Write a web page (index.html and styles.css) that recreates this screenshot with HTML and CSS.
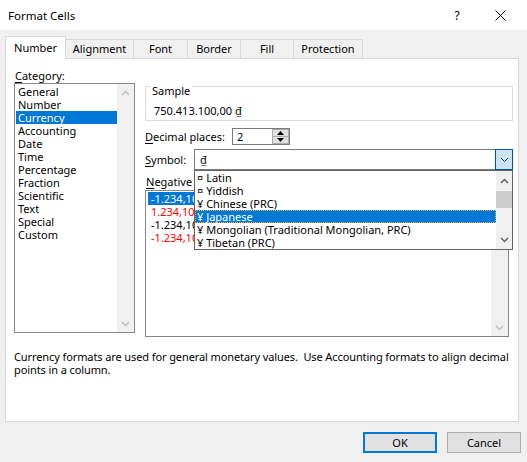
FILE: index.html
```html
<!DOCTYPE html>
<html lang="en">
<head>
    <meta charset="UTF-8">
    <title>Format Cells</title>
    <link rel="stylesheet" href="styles.css">
</head>
<body>
    <div class="titlebar">
        <span class="title">Format Cells</span>
        <span class="title-btn help">?</span>
        <span class="title-btn close">
            <svg width="11" height="11" viewBox="0 0 11 11"><path d="M0.5 0.5 L10.5 10.5 M10.5 0.5 L0.5 10.5" stroke="#000" stroke-width="1" fill="none"/></svg>
        </span>
    </div>

    <div class="tabs">
        <div class="tab tab-number active">Number</div>
        <div class="tab tab-alignment">Alignment</div>
        <div class="tab tab-font">Font</div>
        <div class="tab tab-border">Border</div>
        <div class="tab tab-fill">Fill</div>
        <div class="tab tab-protection">Protection</div>
    </div>

    <div class="panel">
        <div class="columns">
            <div class="category-col">
                <div class="label"><u>C</u>ategory:</div>
                <div class="listbox category-list">
                    <ul class="items">
                        <li>General</li>
                        <li>Number</li>
                        <li class="selected">Currency</li>
                        <li>Accounting</li>
                        <li>Date</li>
                        <li>Time</li>
                        <li>Percentage</li>
                        <li>Fraction</li>
                        <li>Scientific</li>
                        <li>Text</li>
                        <li>Special</li>
                        <li>Custom</li>
                    </ul>
                    <div class="scrollbar disabled">
                        <div class="arrow"><svg width="9" height="6" viewBox="0 0 9 6"><polyline points="1,5 4.5,1.5 8,5" fill="none" stroke="currentColor" stroke-width="1.5"/></svg></div>
                        <div class="arrow"><svg width="9" height="6" viewBox="0 0 9 6"><polyline points="1,1 4.5,4.5 8,1" fill="none" stroke="currentColor" stroke-width="1.5"/></svg></div>
                    </div>
                </div>
            </div>

            <div class="detail-col">
                <div class="group">
                    <div class="group-label">Sample</div>
                    <div class="sample-value">750.413.100,00 ₫</div>
                </div>

                <div class="field-row decimal-row">
                    <span class="field-label decimal-label"><u>D</u>ecimal places:</span>
                    <div class="spin">
                        <span class="spin-value">2</span>
                        <div class="spin-buttons">
                            <div class="spin-btn"><svg width="7" height="4" viewBox="0 0 7 4"><polygon points="0,4 3.5,0 7,4" fill="#000"/></svg></div>
                            <div class="spin-btn"><svg width="7" height="4" viewBox="0 0 7 4"><polygon points="0,0 3.5,4 7,0" fill="#000"/></svg></div>
                        </div>
                    </div>
                </div>

                <div class="field-row symbol-row">
                    <span class="field-label symbol-label"><u>S</u>ymbol:</span>
                    <div class="combo">
                        <span class="combo-value">₫</span>
                        <div class="combo-btn"><svg width="9" height="6" viewBox="0 0 9 6"><polyline points="1,1 4.5,4.5 8,1" fill="none" stroke="#333" stroke-width="1"/></svg></div>

                        <div class="dropdown">
                            <ul class="items">
                                <li>¤ Latin</li>
                                <li>¤ Yiddish</li>
                                <li>¥ Chinese (PRC)</li>
                                <li class="selected">¥ Japanese</li>
                                <li>¥ Mongolian (Traditional Mongolian, PRC)</li>
                                <li>¥ Tibetan (PRC)</li>
                            </ul>
                            <div class="scrollbar active">
                                <div class="arrow"><svg width="9" height="6" viewBox="0 0 9 6"><polyline points="1,5 4.5,1.5 8,5" fill="none" stroke="currentColor" stroke-width="1.5"/></svg></div>
                                <div class="thumb"></div>
                                <div class="track"></div>
                                <div class="arrow"><svg width="9" height="6" viewBox="0 0 9 6"><polyline points="1,1 4.5,4.5 8,1" fill="none" stroke="currentColor" stroke-width="1.5"/></svg></div>
                            </div>
                        </div>
                    </div>
                </div>

                <div class="label negative-label"><u>N</u>egative numbers:</div>
                <div class="listbox negative-list">
                    <ul class="items">
                        <li class="selected">-1.234,10 ₫</li>
                        <li class="red">1.234,10 ₫</li>
                        <li>-1.234,10 ₫</li>
                        <li class="red">-1.234,10 ₫</li>
                    </ul>
                    <div class="scrollbar disabled">
                        <div class="arrow"><svg width="9" height="6" viewBox="0 0 9 6"><polyline points="1,5 4.5,1.5 8,5" fill="none" stroke="currentColor" stroke-width="1.5"/></svg></div>
                        <div class="arrow"><svg width="9" height="6" viewBox="0 0 9 6"><polyline points="1,1 4.5,4.5 8,1" fill="none" stroke="currentColor" stroke-width="1.5"/></svg></div>
                    </div>
                </div>
            </div>
        </div>

        <p class="description">Currency formats are used for general monetary values.&nbsp; Use Accounting formats to align decimal<br>points in a column.</p>
    </div>

    <div class="footer">
        <button class="btn default">OK</button>
        <button class="btn">Cancel</button>
    </div>
</body>
</html>
```

FILE: styles.css
```css
* {
    box-sizing: border-box;
}

body {
    margin: 0;
    width: 527px;
    height: 462px;
    overflow: hidden;
    background-color: #f0f0f0;
    font-family: "Noto Sans", sans-serif;
    font-size: 11px;
    color: #000;
}

u {
    text-decoration-thickness: 1px;
    text-underline-offset: 2px;
}

.titlebar {
    height: 30px;
    background-color: #fff;
    display: flex;
    align-items: center;
    padding-left: 8px;
    padding-right: 17px;
    font-size: 11.5px;
}

.title {
    flex: 1;
}

.title-btn {
    width: 20px;
    text-align: center;
    display: flex;
    justify-content: center;
}

.help {
    margin-right: 23px;
    font-size: 12px;
}

/* tabs */
.tabs {
    display: flex;
    align-items: flex-end;
    height: 22px;
    margin-top: 6px;
    padding-left: 5px;
    position: relative;
    z-index: 1;
}

.tab {
    height: 19px;
    line-height: 17px;
    border: 1px solid #d9d9d9;
    border-bottom: none;
    margin-left: -1px;
    text-align: center;
    background-color: #f0f0f0;
}

.tab.active {
    height: 23px;
    line-height: 21px;
    margin-left: 0;
    margin-bottom: -1px;
    background-color: #fff;
    position: relative;
    z-index: 2;
}

.tab-number { width: 61px; }
.tab-alignment { width: 69px; }
.tab-font { width: 55px; }
.tab-border { width: 54px; }
.tab-fill { width: 54px; }
.tab-protection { width: 70px; }

/* panel */
.panel {
    margin-left: 5px;
    width: 514px;
    height: 364px;
    border: 1px solid #d9d9d9;
    background-color: #fff;
    padding: 9px 0 0 8px;
}

.columns {
    display: flex;
    gap: 10px;
}

.category-col {
    width: 121px;
}

.label {
    line-height: 15px;
    padding-left: 1px;
    white-space: nowrap;
}

.listbox {
    display: flex;
    border: 1px solid #828790;
    background-color: #fff;
}

.listbox .items {
    flex: 1;
    min-width: 0;
    overflow: hidden;
}

.items {
    list-style: none;
    margin: 0;
    padding: 1px 0 0 1px;
}

.items li {
    line-height: 13px;
    height: 13px;
    padding-left: 2px;
    white-space: nowrap;
}

.items li.selected {
    background-color: #0078d7;
    color: #fff;
}

.items li.red {
    color: #ff0000;
}

.category-list {
    height: 250px;
}

.scrollbar {
    width: 17px;
    flex-shrink: 0;
    background-color: #f0f0f0;
    display: flex;
    flex-direction: column;
    justify-content: space-between;
}

.scrollbar .arrow {
    height: 17px;
    display: flex;
    align-items: center;
    justify-content: center;
}

.scrollbar.disabled {
    color: #bfbfbf;
}

.scrollbar.active {
    color: #606060;
    width: 16px;
    justify-content: flex-start;
}

.scrollbar.active .arrow {
    height: 19px;
}

.scrollbar .thumb {
    height: 17px;
    margin-top: 1px;
    background-color: #cdcdcd;
}

.scrollbar .track {
    flex: 1;
}

/* right column */
.detail-col {
    width: 368px;
}

.group {
    margin-top: 18px;
    height: 35px;
    border: 1px solid #dcdcdc;
    padding-left: 4px;
}

.group-label {
    width: fit-content;
    margin-top: -4px;
    padding: 0 2px;
    line-height: 15px;
    background-color: #fff;
}

.sample-value {
    margin-top: 5px;
    padding-left: 4px;
    line-height: 15px;
}

.field-row {
    display: flex;
    align-items: center;
}

.field-label {
    white-space: nowrap;
    flex-shrink: 0;
}

.decimal-row {
    margin-top: 7px;
    height: 17px;
}

.decimal-label {
    width: 87px;
}

.spin {
    width: 58px;
    height: 17px;
    border: 1px solid #7a7a7a;
    display: flex;
    align-items: center;
}

.spin-value {
    flex: 1;
    padding-left: 4px;
    line-height: 15px;
}

.spin-buttons {
    width: 17px;
    height: 15px;
    display: flex;
    flex-direction: column;
}

.spin-btn {
    flex: 1;
    background-color: #e1e1e1;
    border: 1px solid #adadad;
    display: flex;
    align-items: center;
    justify-content: center;
}

.spin-btn + .spin-btn {
    border-top: none;
}

.symbol-row {
    margin-top: 4px;
    height: 21px;
}

.symbol-label {
    width: 49px;
}

.combo {
    width: 319px;
    height: 21px;
    border: 1px solid #7a7a7a;
    display: flex;
    position: relative;
}

.combo-value {
    flex: 1;
    padding-left: 5px;
    line-height: 19px;
}

.combo-btn {
    width: 18px;
    background-color: #cce4f7;
    border: 1px solid #005499;
    margin: -1px -1px -1px 0;
    display: flex;
    align-items: center;
    justify-content: center;
}

.dropdown {
    position: absolute;
    top: 20px;
    left: -1px;
    width: 319px;
    height: 80px;
    border: 1px solid #646464;
    background-color: #fff;
    display: flex;
    z-index: 5;
}

.dropdown .items {
    flex: 1;
    padding: 0;
}

.dropdown .items li.selected {
    outline: 1px dotted #f5b041;
    outline-offset: -1px;
}

.negative-label {
    margin-top: 4px;
}

.negative-list {
    margin-top: 1px;
    width: 364px;
    height: 147px;
}

.negative-list .items {
    padding-left: 2px;
}

.negative-list .items li {
    padding-left: 3px;
}

.description {
    margin: 13px 0 0 0;
    line-height: 13px;
    white-space: nowrap;
    letter-spacing: -0.1px;
}

/* buttons */
.footer {
    display: flex;
    justify-content: flex-end;
    gap: 10px;
    margin-top: 10px;
    padding-right: 6px;
}

.btn {
    width: 74px;
    height: 21px;
    font-family: inherit;
    font-size: 11px;
    background-color: #e1e1e1;
    border: 1px solid #adadad;
    padding: 0;
    color: #000;
}

.btn.default {
    border: 2px solid #0078d7;
}
```
